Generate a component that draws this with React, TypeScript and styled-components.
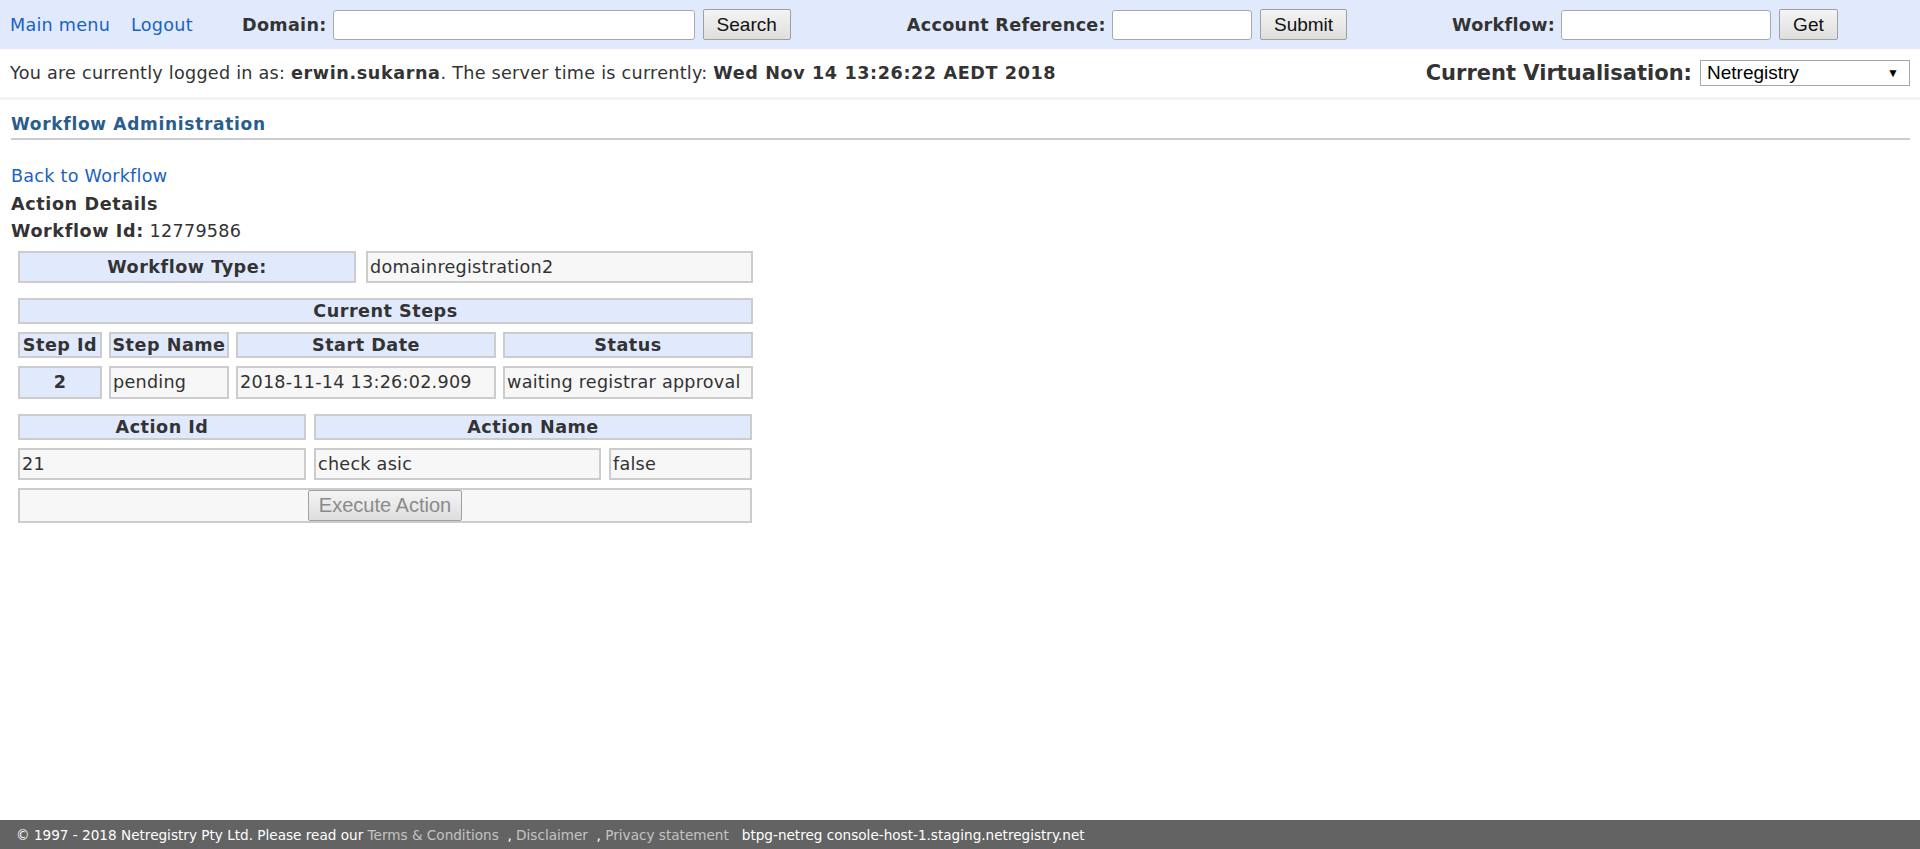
import styled, { createGlobalStyle } from 'styled-components'

// global
const GlobalStyle = createGlobalStyle`
  html, body {
    margin: 0;
    padding: 0;
  }
  body {
    font-family: "DejaVu Sans", Verdana, sans-serif;
    font-size: 17.6px;
    letter-spacing: 0.25px;
    color: #333;
    background: #fff;
  }
  * {
    box-sizing: border-box;
  }
`

// types
interface CellProps {
  $head?: boolean
  $span?: number
  $center?: boolean
}

interface GroupProps {
  $offset: number
}

interface InputProps {
  $width: number
}

// layout
const Page = styled.div`
  min-height: 100vh;
  display: flex;
  flex-direction: column;
`

const TopBar = styled.div`
  display: flex;
  align-items: center;
  height: 49px;
  background-color: #e1eafc;
  padding-left: 10px;
`

const NavLinks = styled.div`
  display: flex;
  gap: 21px;
  width: 232px;
`

const Link = styled.a`
  color: #1a62c4;
  text-decoration: none;
  cursor: pointer;
`

const SearchGroup = styled.form<GroupProps>`
  display: flex;
  align-items: center;
  margin: 0 0 0 ${(p) => p.$offset}px;
`

const Label = styled.label`
  font-weight: bold;
  letter-spacing: 0.3px;
  margin-right: 6px;
`

const TextInput = styled.input<InputProps>`
  width: ${(p) => p.$width}px;
  height: 30px;
  border: 1px solid #a9a9a9;
  border-radius: 3px;
  background: #fff;
`

const Button = styled.button`
  font-family: "Liberation Sans", Arial, sans-serif;
  font-size: 19px;
  letter-spacing: 0;
  color: #111;
  height: 31px;
  margin-left: 8px;
  padding: 0 13px;
  border: 1px solid #a0a0a0;
  border-radius: 2px;
  background: linear-gradient(#f4f4f4, #dedede);
  cursor: pointer;

  &:disabled {
    color: #8a8a8a;
    cursor: default;
  }
`

const InfoBar = styled.div`
  display: flex;
  align-items: center;
  justify-content: space-between;
  height: 51px;
  padding: 0 10px;
  border-bottom: 3px solid #f2f2f2;
`

const Virtualisation = styled.div`
  display: flex;
  align-items: center;
  gap: 8px;
`

const VirtLabel = styled.span`
  font-size: 21px;
  font-weight: bold;
  letter-spacing: 0;
`

const FakeSelect = styled.div`
  display: flex;
  align-items: center;
  justify-content: space-between;
  width: 210px;
  height: 26px;
  padding: 0 10px 0 6px;
  border: 1px solid #a6a6a6;
  background: #fff;
  font-family: "Liberation Sans", Arial, sans-serif;
  font-size: 19px;
  letter-spacing: 0;
  color: #000;
`

const Arrow = styled.span`
  font-size: 12px;
`

const Main = styled.main`
  padding: 0 10px 0 11px;
`

const Heading = styled.h2`
  margin: 11px 0 0;
  font-size: 17px;
  letter-spacing: 0.7px;
  line-height: 27px;
  color: #2a5d8f;
  border-bottom: 2px solid #ccc;
`

const Lines = styled.div`
  margin-top: 23px;
  line-height: 27.5px;
`

const Bold = styled.span`
  font-weight: bold;
  letter-spacing: 0.6px;
`

const Block = styled.div<{ $cols: string; $gap?: number }>`
  display: grid;
  grid-template-columns: ${(p) => p.$cols};
  column-gap: ${(p) => p.$gap ?? 7}px;
  row-gap: 8px;
  width: 735px;
  margin: 0 0 15px 7px;
`

const Cell = styled.div<CellProps>`
  grid-column: span ${(p) => p.$span ?? 1};
  display: flex;
  align-items: center;
  justify-content: ${(p) => (p.$head || p.$center ? 'center' : 'flex-start')};
  min-height: 26px;
  padding: 0 2px;
  border: 2px solid #ccc;
  background-color: ${(p) => (p.$head ? '#e1eafc' : '#f7f7f7')};
  font-weight: ${(p) => (p.$head ? 'bold' : 'normal')};
  letter-spacing: ${(p) => (p.$head ? '0.5px' : '0.25px')};
  white-space: nowrap;
  overflow: hidden;
`

const Footer = styled.footer`
  margin-top: auto;
  display: flex;
  align-items: center;
  height: 29px;
  padding-left: 16px;
  background-color: #636363;
  color: #fff;
  font-size: 13.6px;
  letter-spacing: 0;
  white-space: pre;
`

const FootLink = styled.a`
  color: #c4c4c4;
  text-decoration: none;
`

export default function App() {
  return (
    <Page>
      <GlobalStyle />
      <TopBar>
        <NavLinks>
          <Link>Main menu</Link>
          <Link>Logout</Link>
        </NavLinks>
        <SearchGroup $offset={0}>
          <Label>Domain:</Label>
          <TextInput $width={362} />
          <Button type="button">Search</Button>
        </SearchGroup>
        <SearchGroup $offset={116}>
          <Label>Account Reference:</Label>
          <TextInput $width={140} />
          <Button type="button">Submit</Button>
        </SearchGroup>
        <SearchGroup $offset={105}>
          <Label>Workflow:</Label>
          <TextInput $width={210} />
          <Button type="button">Get</Button>
        </SearchGroup>
      </TopBar>

      <InfoBar>
        <div>
          You are currently logged in as: <Bold>erwin.sukarna</Bold>. The server time is currently:{' '}
          <Bold>Wed Nov 14 13:26:22 AEDT 2018</Bold>
        </div>
        <Virtualisation>
          <VirtLabel>Current Virtualisation:</VirtLabel>
          <FakeSelect>
            Netregistry
            <Arrow>▼</Arrow>
          </FakeSelect>
        </Virtualisation>
      </InfoBar>

      <Main>
        <Heading>Workflow Administration</Heading>
        <Lines>
          <div>
            <Link>Back to Workflow</Link>
          </div>
          <Bold>Action Details</Bold>
          <div>
            <Bold>Workflow Id:</Bold> 12779586
          </div>
        </Lines>

        <Block $cols="338px 387px" $gap={10} style={{ marginTop: 5 }}>
          <Cell $head style={{ minHeight: 32 }}>Workflow Type:</Cell>
          <Cell>domainregistration2</Cell>
        </Block>

        <Block $cols="84px 120px 260px 250px">
          <Cell $head $span={4}>Current Steps</Cell>
          <Cell $head>Step Id</Cell>
          <Cell $head>Step Name</Cell>
          <Cell $head>Start Date</Cell>
          <Cell $head>Status</Cell>
          <Cell $head style={{ minHeight: 33 }}>2</Cell>
          <Cell>pending</Cell>
          <Cell>2018-11-14 13:26:02.909</Cell>
          <Cell>waiting registrar approval</Cell>
        </Block>

        <Block $cols="288px 287px 143px" $gap={8}>
          <Cell $head>Action Id</Cell>
          <Cell $head $span={2}>Action Name</Cell>
          <Cell style={{ minHeight: 32 }}>21</Cell>
          <Cell>check asic</Cell>
          <Cell>false</Cell>
          <Cell $span={3} $center style={{ minHeight: 35 }}>
            <Button type="button" disabled style={{ marginLeft: 0, height: 31, padding: '0 10px', fontSize: 20 }}>
              Execute Action
            </Button>
          </Cell>
        </Block>
      </Main>

      <Footer>
        © 1997 - 2018 Netregistry Pty Ltd. Please read our <FootLink>Terms &amp; Conditions</FootLink>  , <FootLink>Disclaimer</FootLink>  , <FootLink>Privacy statement</FootLink>   btpg-netreg console-host-1.staging.netregistry.net
      </Footer>
    </Page>
  )
}
